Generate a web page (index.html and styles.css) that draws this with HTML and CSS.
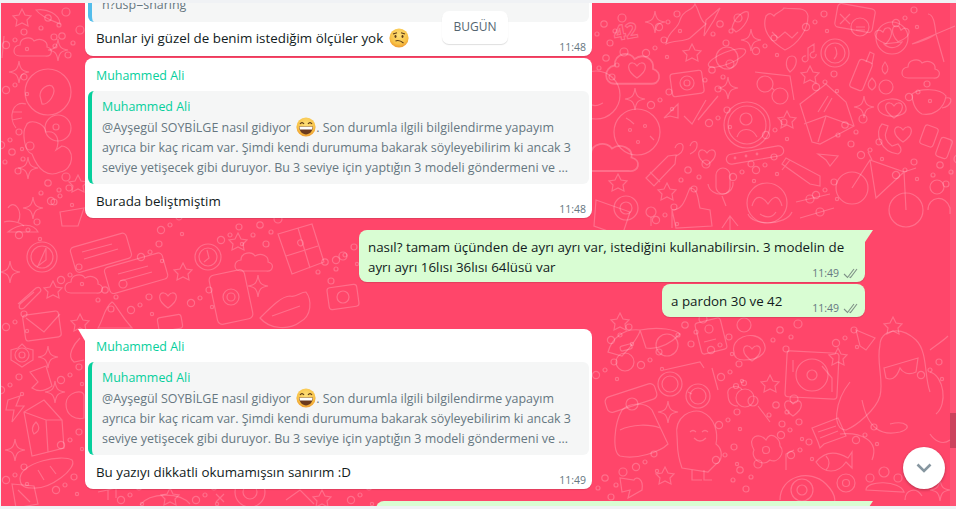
FILE: index.html
```html
<!DOCTYPE html>
<html>
<head>
    <title>Sohbet</title>
    <link rel="stylesheet" href="styles.css">
</head>
<body>
    <div class="chat">
        <svg class="doodles" width="956" height="509" viewBox="0 0 956 509" fill="none">
            <defs>
                <radialGradient id="face" cx="50%" cy="35%" r="65%">
                    <stop offset="0" stop-color="#fde07a"/>
                    <stop offset="0.7" stop-color="#f8c247"/>
                    <stop offset="1" stop-color="#ee9a2e"/>
                </radialGradient>
                <path id="star" d="M0 -9 L3 -3 L9 -2 L5 2 L6 8 L0 5 L-6 8 L-5 2 L-9 -2 L-3 -3 Z"/>
                <path id="spark" d="M0 -11 C1 -3 3 -1 10 0 C3 1 1 3 0 11 C-1 3 -3 1 -10 0 C-3 -1 -1 -3 0 -11 Z"/>
                <path id="heart" d="M0 8 C-12 0 -9 -8 -4 -7 C-2 -7 -1 -5 0 -4 C1 -5 2 -7 4 -7 C9 -8 12 0 0 8 Z"/>
                <path id="cloud" d="M-14 8 C-22 8 -22 -2 -14 -3 C-14 -11 -3 -12 0 -7 C6 -11 14 -7 13 -1 C20 1 18 9 11 8 Z"/>
                <g id="dots">
                    <circle cx="0" cy="0" r="3.2"/><circle cx="11" cy="7" r="2"/><circle cx="-7" cy="10" r="2"/>
                    <circle cx="18" cy="-6" r="4"/><circle cx="6" cy="19" r="3"/>
                </g>
                <g id="dots2">
                    <circle cx="0" cy="0" r="2"/><circle cx="9" cy="-8" r="3"/><circle cx="-9" cy="5" r="3.6"/>
                    <circle cx="12" cy="9" r="1.6"/>
                </g>
            </defs>
            <g class="lines">
                <!-- scattered dots -->
                <use href="#dots" x="604" y="24"/><use href="#dots" x="606" y="58"/>
                <use href="#dots2" x="655" y="48"/><use href="#dots2" x="668" y="22"/>
                <use href="#dots" x="720" y="24"/><use href="#dots2" x="765" y="46"/>
                <use href="#dots2" x="815" y="22"/><use href="#dots2" x="825" y="82"/>
                <use href="#dots2" x="905" y="18"/><use href="#dots2" x="918" y="92"/>
                <use href="#dots2" x="660" y="100"/><use href="#dots" x="712" y="70"/>
                <use href="#dots2" x="718" y="118"/><use href="#dots2" x="775" y="130"/>
                <use href="#dots" x="845" y="125"/><use href="#dots2" x="870" y="150"/>
                <use href="#dots" x="940" y="165"/><use href="#dots" x="688" y="170"/>
                <use href="#dots2" x="742" y="172"/><use href="#dots2" x="765" y="165"/>
                <use href="#dots2" x="825" y="190"/><use href="#dots2" x="665" y="215"/>
                <use href="#dots2" x="905" y="170"/>
                <use href="#dots2" x="620" y="335"/><use href="#dots" x="685" y="325"/>
                <use href="#dots" x="780" y="330"/><use href="#dots2" x="845" y="338"/>
                <use href="#dots2" x="605" y="370"/><use href="#dots2" x="650" y="360"/>
                <use href="#dots2" x="720" y="345"/><use href="#dots2" x="730" y="372"/>
                <use href="#dots" x="776" y="405"/><use href="#dots2" x="728" y="420"/>
                <use href="#dots2" x="725" y="455"/><use href="#dots" x="740" y="470"/>
                <use href="#dots2" x="790" y="430"/><use href="#dots2" x="800" y="450"/>
                <use href="#dots" x="605" y="478"/><use href="#dots2" x="645" y="462"/>
                <use href="#dots2" x="865" y="435"/><use href="#dots2" x="930" y="370"/>
                <use href="#dots" x="48" y="18"/><use href="#dots2" x="15" y="40"/>
                <use href="#dots" x="62" y="36"/><use href="#dots2" x="15" y="85"/>
                <use href="#dots2" x="10" y="140"/><use href="#dots" x="12" y="152"/>
                <use href="#dots" x="48" y="183"/><use href="#dots2" x="60" y="196"/>
                <use href="#dots2" x="28" y="230"/><use href="#dots2" x="70" y="275"/>
                <use href="#dots" x="105" y="290"/><use href="#dots2" x="150" y="252"/>
                <use href="#dots2" x="170" y="225"/><use href="#dots2" x="230" y="235"/>
                <use href="#dots" x="260" y="225"/><use href="#dots2" x="140" y="305"/>
                <use href="#dots2" x="200" y="298"/><use href="#dots" x="325" y="262"/>
                <use href="#dots2" x="345" y="255"/><use href="#dots2" x="15" y="322"/>
                <use href="#dots2" x="70" y="375"/><use href="#dots2" x="10" y="385"/>
                <use href="#dots2" x="70" y="440"/><use href="#dots2" x="15" y="475"/>
                <use href="#dots2" x="65" y="485"/><use href="#dots2" x="130" y="495"/>
                <use href="#dots2" x="205" y="495"/><use href="#dots2" x="360" y="495"/>

                <!-- upper right -->
                <text class="num" x="615" y="41" transform="rotate(-10 615 41)">42</text>
                <use href="#spark" x="655" y="22"/>
                <path d="M666 44 C668 30 678 30 680 20 C684 8 692 12 695 4 C700 12 700 22 706 24 L690 38 C684 42 674 40 666 44 Z"/>
                <path d="M704 36 L706 20 L720 8 L714 20 Z"/>
                <path d="M732 28 C734 18 744 10 748 12 C750 18 744 28 736 32 Z"/>
                <use href="#spark" x="751" y="40"/>
                <path d="M785 50 C768 40 762 28 766 16 C770 12 772 14 774 16 C776 12 782 12 784 8 C796 10 806 6 808 16 C808 30 798 44 785 50 Z"/>
                <path d="M772 32 L778 38 L785 32 L792 38 L798 32"/>
                <rect x="836" y="6" width="38" height="24" rx="4" transform="rotate(10 855 18)"/>
                <circle cx="860" cy="27" r="9"/><path d="M840 14 L850 24 M850 14 L840 24 M856 27 H865 M856 30 H865"/>
                <circle cx="892" cy="38" r="16"/>
                <use href="#heart" x="884" y="36" transform="rotate(-15 884 36)"/>
                <use href="#heart" x="900" y="34" transform="rotate(15 900 34)"/>
                <path d="M884 44 C890 50 898 48 902 42 Z"/>
                <path d="M928 14 C934 14 935 26 936 34 L955 26 M912 44 L936 34 L944 62 M936 34 C930 38 920 42 912 44"/>
                <path d="M808 58 V48 L814 44 V52 M816 54 a3 3 0 1 1 -2 -2 M808 58 a3 3 0 1 1 -2 -2"/>
                <circle cx="835" cy="53" r="14"/><circle cx="835" cy="53" r="10"/><path d="M835 47 C838 52 837 56 834 59"/>
                <use href="#cloud" x="637" y="70" transform="translate(-270 -45) scale(1.42 1.65)"/>
                <use href="#heart" x="637" y="70"/>
                <use href="#star" x="692" y="53"/>
                <circle cx="727" cy="58" r="11"/><ellipse cx="727" cy="58" rx="20" ry="6" transform="rotate(-22 727 58)"/>
                <path d="M790 72 C784 66 786 56 792 56 C798 56 798 66 790 72 Z"/>
                <rect x="671" y="72" width="32" height="23" rx="3" transform="rotate(-8 687 83)"/>
                <circle cx="687" cy="83" r="7"/><circle cx="687" cy="83" r="3"/>
                <circle cx="765" cy="84" r="8"/><circle cx="780" cy="96" r="8"/><path d="M755 72 L790 76 L794 100 M772 88 L774 90"/>
                <use href="#star" x="810" y="75"/>
                <use href="#spark" x="728" y="88"/>
                <rect x="854" y="60" width="14" height="30" rx="3" transform="rotate(22 861 75)"/>
                <path d="M866 62 L870 52 L874 54 L872 64"/>
                <path d="M885 74 C880 70 882 66 885 62 C888 66 890 70 885 74 Z M872 90 C866 86 868 82 872 78 C876 82 878 86 872 90 Z"/>
                <use href="#cloud" x="922" y="70"/>
                <path d="M912 94 C920 88 940 88 946 96 C944 110 932 116 922 114 C914 110 912 100 912 94 Z M946 98 C954 96 952 106 942 108"/>
                <circle cx="886" cy="87" r="7"/>
                <path d="M878 108 C876 98 904 94 906 108 C908 118 880 120 878 108 Z"/><use href="#heart" x="894" y="110"/>
                <circle cx="596" cy="95" r="24"/><path d="M590 104 C596 108 600 104 603 103"/>
                <use href="#spark" x="635" y="99"/>
                <path d="M664 118 L678 104 L678 118 L670 116 Z"/>
                <path d="M684 116 L692 124 L706 100 M698 120 L718 96"/>
                <circle cx="747" cy="125" r="23"/><circle cx="747" cy="125" r="19"/><circle cx="746" cy="119" r="6"/>
                <path d="M737 137 C740 127 752 127 757 137"/>
                <use href="#star" x="787" y="120"/>
                <path d="M800 104 L826 84 L846 102 L854 126 L820 144 L812 142 Z M804 124 L826 116 L854 126 M818 142 L826 116"/>
                <path d="M818 112 L828 96 M824 112 L832 98"/>
                <use href="#spark" x="864" y="107"/>
                <path d="M882 124 C874 132 880 152 898 154 C902 152 902 148 898 144 L892 146 C886 142 884 136 886 132 L888 126 Z"/>
                <use href="#heart" x="903" y="134"/>
                <rect x="922" y="126" width="14" height="20" rx="3" transform="rotate(20 929 136)"/>
                <rect x="938" y="138" width="12" height="20" rx="3" transform="rotate(20 944 148)"/>
                <circle cx="637" cy="132" r="23"/><circle cx="630" cy="130" r="1.5"/><circle cx="645" cy="126" r="1.5"/><circle cx="638" cy="142" r="1.5"/>
                <path d="M626 118 C630 120 632 122 634 124 M650 136 L654 140"/>
                <use href="#cloud" x="608" y="158" transform="translate(-300 -78) scale(1.5)"/>
                <path d="M675 148 C677 142 684 142 683 148 C683 152 680 154 676 156 M690 146 C692 140 698 140 697 146 C697 150 694 152 690 154"/>
                <use href="#heart" x="707" y="157"/>
                <rect x="726" y="150" width="58" height="10" rx="5" transform="rotate(-10 755 155)"/>
                <circle cx="735" cy="158" r=".8"/><circle cx="746" cy="156" r=".8"/><circle cx="757" cy="154" r=".8"/>
                <path d="M646 178 L668 156 L676 155 L675 164 L654 186 Z M650 172 L660 182"/>
                <path d="M782 164 L786 158 L820 176 L820 186 L810 184 Z M790 160 L782 170"/>
                <path d="M818 154 L838 156 L830 166 L826 160 Z"/>
                <circle cx="852" cy="188" r="16"/><circle cx="906" cy="210" r="17"/>
                <path d="M852 188 L870 160 L904 172 L906 210 M870 160 L876 198 L904 172 M868 152 L872 160 M904 172 L916 168"/>
                <rect x="716" y="168" width="14" height="26" rx="7"/>
                <path d="M708 184 C710 198 734 198 733 182 M722 196 L726 206"/>
                <use href="#star" x="618" y="183"/><use href="#star" x="667" y="192"/>
                <path d="M672 210 C684 210 686 196 690 188 C698 188 698 200 700 208 L710 210 L712 226 L676 228 Z M672 210 L672 228"/>
                <circle cx="767" cy="203" r="20"/><path d="M752 206 C756 192 764 198 768 204 C772 198 778 192 782 206 M760 214 C766 218 772 218 776 212 M748 214 C752 226 786 226 792 212"/>
                <path d="M796 202 L830 194 M800 218 L834 208"/><circle cx="810" cy="199" r="4"/><circle cx="820" cy="212" r="4"/>
                <circle cx="937" cy="187" r="7"/><path d="M928 210 C928 196 946 194 950 208 L950 214"/>
                <path d="M596 200 L630 212 L622 236 L594 226 Z"/><circle cx="626" cy="208" r="12"/><circle cx="626" cy="208" r="6"/>
                <circle cx="651" cy="212" r="5"/><path d="M651 217 V226"/>
                <path d="M722 228 L730 216 L738 226 M730 216 V232"/>

                <!-- left column -->
                <use href="#star" x="22" y="18"/>
                <path d="M36 10 C46 8 60 14 60 24 C56 22 42 18 36 10 Z"/>
                <use href="#cloud" x="34" y="48"/>
                <use href="#spark" x="58" y="50"/><use href="#spark" x="19" y="72"/>
                <path d="M4 36 L2 58"/>
                <circle cx="48" cy="92" r="23"/><path d="M40 96 C40 88 48 84 52 86 C58 92 48 106 42 104 Z"/>
                <path d="M26 104 C12 100 8 118 16 128 M12 112 L22 112 M12 120 L22 118"/>
                <path d="M26 126 C28 118 44 122 46 132 C58 130 60 142 56 150 L62 146 C76 148 74 170 60 172 C48 178 38 170 32 154 C24 152 22 132 26 126 Z"/>
                <circle cx="58" cy="128" r="13"/><circle cx="56" cy="127" r="3"/>
                <use href="#spark" x="28" y="168"/><use href="#spark" x="33" y="208"/>
                <use href="#star" x="78" y="184"/>
                <path d="M8 208 C14 198 24 212 18 222 M4 222 C10 220 20 222 24 226"/>
                <path d="M60 212 L84 208 L78 226 L62 226 Z"/>

                <!-- middle band -->
                <path d="M8 232 C20 222 34 224 38 232 Z"/>
                <circle cx="42" cy="257" r="15"/><circle cx="42" cy="257" r="11"/><path d="M38 266 L46 248 L46 260 Z"/>
                <rect x="72" y="240" width="58" height="26" rx="4" transform="rotate(-16 100 253)"/>
                <path d="M82 252 L112 244 M84 259 L118 249"/>
                <rect x="106" y="260" width="60" height="27" rx="4" transform="rotate(-16 135 273)"/>
                <path d="M118 274 L148 266 M120 281 L152 272"/>
                <use href="#spark" x="10" y="272"/>
                <path d="M18 304 L36 288 C40 286 42 290 40 292 L24 308 C20 310 18 308 20 304 L34 292"/>
                <use href="#star" x="53" y="290"/>
                <use href="#cloud" x="85" y="285"/>
                <use href="#star" x="183" y="272"/>
                <circle cx="208" cy="257" r="13"/><circle cx="208" cy="257" r="9"/><path d="M207 250 L209 258 L204 262"/>
                <use href="#star" x="238" y="242"/>
                <use href="#cloud" x="255" y="263"/>
                <path d="M278 234 L312 224 L324 262 L292 274 Z M298 228 L310 268 M286 256 L318 246"/>
                <path d="M298 244 C296 240 302 238 303 242 C304 245 300 248 298 244 Z"/>
                <rect x="213" y="272" width="36" height="50" rx="5" transform="rotate(-12 231 297)"/>
                <circle cx="231" cy="297" r="8"/><circle cx="231" cy="297" r="4"/>
                <use href="#spark" x="258" y="286"/>
                <path d="M260 318 C272 306 282 296 290 296 C296 298 300 292 306 292 C312 300 312 316 300 322 C290 330 270 330 260 318 Z M272 316 L300 306"/>
                <rect x="328" y="286" width="30" height="22" rx="3" transform="rotate(-8 343 297)"/>
                <circle cx="343" cy="297" r="6"/><use href="#heart" x="168" y="300"/>
                <rect x="24" y="313" width="36" height="26" rx="3" transform="rotate(-8 42 326)"/>
                <path d="M26 318 L44 332 L60 314"/><use href="#star" x="80" y="323"/>
                <path d="M112 302 C116 304 118 312 132 328 L98 328 C104 318 104 308 112 302 Z"/>
                <rect x="158" y="316" width="24" height="14" rx="3" transform="rotate(-10 170 323)"/>

                <!-- lower left -->
                <circle cx="22" cy="355" r="7"/><circle cx="22" cy="355" r="3"/>
                <path d="M22 344 L26 348 L33 350 L33 360 L28 363 L22 367 L16 363 L11 360 L11 350 L18 348 Z"/>
                <use href="#spark" x="48" y="357"/>
                <path d="M30 372 L46 366 L52 386 C44 392 38 392 32 388 L38 382 Z"/>
                <use href="#spark" x="55" y="392"/>
                <path d="M8 400 L20 396 L16 406 L24 406 L12 422 L14 410 L6 410 Z"/>
                <path d="M66 404 C66 392 84 388 84 396 V418 C76 420 66 416 66 404 Z"/>
                <path d="M80 338 C74 344 66 356 74 362 L84 360"/>
                <path d="M24 412 L44 400 L62 420 L64 448 L32 456 Z M24 412 L32 456 M24 412 L46 420 L62 420 M46 420 L48 452"/>
                <path d="M34 434 C30 428 34 424 36 422 C38 424 42 430 34 434 Z"/>
                <use href="#spark" x="15" y="450"/>
                <path d="M20 478 C22 462 62 454 72 460 C78 468 50 490 32 488 C22 488 20 484 20 478 Z M38 470 L44 480 M50 466 L56 474"/>
                <path d="M12 484 L34 486 L38 504 L16 508 Z M18 490 L30 502"/>

                <!-- bottom band -->
                <path d="M98 492 L108 490 V500 M108 490 L116 488 V498"/>
                <use href="#star" x="322" y="499"/><use href="#star" x="170" y="497"/>
                <circle cx="250" cy="492" r="15"/><circle cx="250" cy="492" r="7"/>
                <path d="M140 505 C150 492 180 492 190 504"/>
                <path d="M216 494 L224 502 M224 494 L216 502"/>
                <path d="M286 500 L300 490 L314 504"/>

                <!-- lower right -->
                <use href="#star" x="620" y="322"/>
                <path d="M608 352 C612 338 624 328 640 330 C640 334 632 346 622 356 Z M640 330 C660 326 676 330 680 334 C672 342 660 350 646 348 Z"/>
                <circle cx="625" cy="362" r="9"/><circle cx="667" cy="345" r="11"/><rect x="620" y="345" width="12" height="5" rx="2" transform="rotate(-15 626 347)"/>
                <rect x="698" y="320" width="26" height="32" rx="3" transform="rotate(-14 711 336)"/>
                <circle cx="709" cy="329" r="4"/><path d="M704 342 L716 339"/>
                <circle cx="744" cy="325" r="7"/>
                <path d="M734 352 C730 338 752 330 762 340 C770 350 762 360 744 360 C738 360 734 358 734 352 Z"/><use href="#heart" x="752" y="353"/>
                <rect x="786" y="352" width="52" height="46" rx="3" transform="rotate(3 812 375)"/>
                <circle cx="812" cy="375" r="16"/><circle cx="812" cy="375" r="5"/><path d="M822 366 L832 378 L832 392 M793 360 V372"/>
                <use href="#star" x="838" y="357"/>
                <path d="M856 330 L875 338 L866 350 L860 346 Z"/><use href="#star" x="893" y="326"/>
                <path d="M880 345 C880 330 900 325 916 340 C928 352 924 376 930 392 M880 345 C876 362 884 380 880 396 C876 410 856 426 846 430 C832 430 834 402 850 382"/>
                <path d="M884 368 L918 358 L916 372 C908 376 902 372 900 368 C896 380 890 380 886 378 Z"/>
                <path d="M930 350 C938 344 944 340 948 336 M930 372 C944 376 948 404 936 414"/>
                <path d="M862 400 C868 430 882 436 900 432 C914 428 906 420 890 424 M840 434 C860 432 880 440 872 460"/>
                <path d="M664 370 L700 362 L704 368 M688 392 L692 394 M712 368 L718 390"/>
                <circle cx="670" cy="384" r="8"/><circle cx="670" cy="384" r="12"/><circle cx="698" cy="396" r="8"/><circle cx="698" cy="396" r="12"/>
                <rect x="605" y="390" width="52" height="16" rx="5" transform="rotate(-18 631 398)"/>
                <path d="M622 410 C630 402 646 402 652 410 L668 444 C660 452 636 460 620 456 C612 452 614 424 622 410 Z M620 430 C632 424 650 424 660 428"/>
                <circle cx="632" cy="404" r="6"/>
                <use href="#spark" x="668" y="412"/>
                <path d="M677 436 C674 416 692 408 702 412 C716 418 718 434 716 444 C724 450 722 462 716 464 L708 472 L682 468 C676 452 678 446 677 436 Z"/>
                <path d="M690 432 C692 430 694 430 696 432 M702 432 C704 430 706 430 708 432 M694 438 C698 442 702 442 706 438 M692 470 V480 H702 M704 470 V480 H712"/>
                <circle cx="745" cy="398" r="9"/><circle cx="753" cy="401" r="5"/>
                <path d="M758 406 L770 422 M728 394 C726 386 740 384 742 390 M728 394 C728 402 732 406 738 406"/>
                <circle cx="736" cy="386" r="2.5"/><circle cx="744" cy="383" r="2.5"/>
                <use href="#star" x="770" y="384"/>
                <use href="#heart" x="793" y="408"/>
                <path d="M754 450 C746 436 760 432 766 440 C770 430 780 438 780 446 C786 452 778 464 770 460 C762 468 750 458 754 450 Z"/><circle cx="766" cy="450" r="3.5"/>
                <path d="M642 490 C644 478 636 476 634 480 L620 478 L622 492 L630 490 L628 498 Z"/>
                <use href="#star" x="665" y="476"/>
                <path d="M780 500 C780 476 810 468 826 484 C838 496 836 505 830 508 M786 470 V454 L794 450"/>
                <circle cx="802" cy="490" r="11"/><circle cx="802" cy="490" r="5"/>
                <path d="M812 428 L838 418 L846 436 L824 444 L820 448 L818 442 Z M818 432 L836 426 M820 438 L838 431"/>
                <path d="M816 462 C826 450 838 452 848 458 L852 452 L852 468 L846 462 C838 474 824 474 816 462 Z M826 456 C830 460 830 466 826 470"/>
                <circle cx="846" cy="483" r="9"/><circle cx="846" cy="483" r="3.5"/>
                <circle cx="884" cy="472" r="5"/><circle cx="870" cy="478" r="4"/><circle cx="898" cy="478" r="4"/>
                <path d="M866 490 C866 480 900 480 904 492 Z"/>
                <use href="#spark" x="940" y="490"/>
                <path d="M905 500 C905 490 916 486 922 496"/>
                <path d="M950 440 C942 446 934 440 930 434"/>
            </g>
        </svg>

        <div class="messages">
            <div class="row in">
                <div class="bubble top">
                    <div class="quote cut blue">
                        <div class="quote-text">n?usp=sharing</div>
                    </div>
                    <div class="text">Bunlar iyi güzel de benim istediğim ölçüler yok <span class="emoji"><svg viewBox="0 0 20 20"><circle cx="10" cy="10" r="9.6" fill="url(#face)"/><ellipse cx="6.5" cy="8.5" rx="1" ry="1.4" fill="#5c3b17"/><ellipse cx="13.5" cy="8.5" rx="1" ry="1.4" fill="#5c3b17"/><path d="M4 6 L8 4.8 M12 4.8 L16 6 M6.5 13 C9 12 12 13 14.5 15" stroke="#5c3b17" stroke-width="1.1" fill="none"/></svg></span></div>
                    <span class="time">11:48</span>
                </div>
            </div>

            <div class="row in gap-s">
                <div class="bubble">
                    <div class="sender">Muhammed Ali</div>
                    <div class="quote">
                        <div class="sender q">Muhammed Ali</div>
                        <div class="quote-text">@Ayşegül SOYBİLGE nasıl gidiyor <span class="emoji"><svg viewBox="0 0 20 20"><circle cx="10" cy="10" r="9.6" fill="url(#face)"/><path d="M4 7 Q6 4.4 8 7 M12 7 Q14 4.4 16 7" stroke="#5c3b17" stroke-width="1.2" fill="none"/><path d="M3 9.6 H17 C16.6 15 13.4 17.4 10 17.4 C6.6 17.4 3.4 15 3 9.6 Z" fill="#6b3a1e"/><path d="M3.4 9.8 H16.6 L16.1 12.6 H3.9 Z" fill="#fff"/></svg></span>. Son durumla ilgili bilgilendirme yapayım<br>ayrıca bir kaç ricam var. Şimdi kendi durumuma bakarak söyleyebilirim ki ancak 3<br>seviye yetişecek gibi duruyor. Bu 3 seviye için yaptığın 3 modeli göndermeni ve ...</div>
                    </div>
                    <div class="text">Burada beliştmiştim</div>
                    <span class="time">11:48</span>
                </div>
            </div>

            <div class="row out gap-l">
                <div class="bubble wide tailed">
                    <span class="tail"></span>
                    <div class="text">nasıl? tamam üçünden de ayrı ayrı var, istediğini kullanabilirsin. 3 modelin de<br>ayrı ayrı 16lısı 36lısı 64lüsü var</div>
                    <span class="time">11:49 <svg class="ticks" width="15" height="11" viewBox="0 0 15 11" fill="none"><path d="M1 6 L4.5 9.5 L11 1 M6.5 9 L7.5 9.5 L14 1" stroke="#7f9187" stroke-width="1.1"/></svg></span>
                </div>
            </div>

            <div class="row out gap-s">
                <div class="bubble short">
                    <div class="text">a pardon 30 ve 42</div>
                    <span class="time">11:49 <svg class="ticks" width="15" height="11" viewBox="0 0 15 11" fill="none"><path d="M1 6 L4.5 9.5 L11 1 M6.5 9 L7.5 9.5 L14 1" stroke="#7f9187" stroke-width="1.1"/></svg></span>
                </div>
            </div>

            <div class="row in gap-l">
                <div class="bubble tailed">
                    <span class="tail"></span>
                    <div class="sender">Muhammed Ali</div>
                    <div class="quote">
                        <div class="sender q">Muhammed Ali</div>
                        <div class="quote-text">@Ayşegül SOYBİLGE nasıl gidiyor <span class="emoji"><svg viewBox="0 0 20 20"><circle cx="10" cy="10" r="9.6" fill="url(#face)"/><path d="M4 7 Q6 4.4 8 7 M12 7 Q14 4.4 16 7" stroke="#5c3b17" stroke-width="1.2" fill="none"/><path d="M3 9.6 H17 C16.6 15 13.4 17.4 10 17.4 C6.6 17.4 3.4 15 3 9.6 Z" fill="#6b3a1e"/><path d="M3.4 9.8 H16.6 L16.1 12.6 H3.9 Z" fill="#fff"/></svg></span>. Son durumla ilgili bilgilendirme yapayım<br>ayrıca bir kaç ricam var. Şimdi kendi durumuma bakarak söyleyebilirim ki ancak 3<br>seviye yetişecek gibi duruyor. Bu 3 seviye için yaptığın 3 modeli göndermeni ve ...</div>
                    </div>
                    <div class="text">Bu yazıyı dikkatli okumamışsın sanırım :D</div>
                    <span class="time">11:49</span>
                </div>
            </div>

            <div class="row out gap-l">
                <div class="bubble next tailed"><span class="tail"></span></div>
            </div>
        </div>

        <div class="date-chip">BUGÜN</div>
        <div class="scroll-thumb"></div>
        <button class="down-btn"><svg width="16" height="10" viewBox="0 0 16 10" fill="none"><path d="M1.5 1.5 L8 8 L14.5 1.5" stroke="#8696a0" stroke-width="2.6"/></svg></button>
    </div>
</body>
</html>
```

FILE: styles.css
```css
* { box-sizing: border-box; }
html, body { margin: 0; height: 100%; overflow: hidden; }
body { background: #f0f2f5; font-family: "Open Sans", "Noto Sans", Arial, sans-serif; padding: 3px 0 3px 1px; }

.chat { position: relative; height: 503px; background: #ff466a; overflow: hidden; }
.doodles { position: absolute; left: -1px; top: -3px; }
.lines { stroke: rgba(255,255,255,0.22); stroke-width: 1.2; }
.num { font: bold 21px "Open Sans", sans-serif; }

.messages { position: relative; display: flex; flex-direction: column; margin-top: -27px; padding: 0 91px 0 84px; }
.row { display: flex; }
.row.out { justify-content: flex-end; }
.gap-s { margin-top: 2px; }
.gap-l { margin-top: 12px; }

.bubble { position: relative; width: 507px; background: #fff; border-radius: 8px; padding: 3px 3px 7px; box-shadow: 0 1px 1px rgba(0,0,0,0.12); color: #111b21; }
.bubble.top { height: 80px; }
.row.out .bubble { background: #d9fdd3; }
.bubble.wide { width: 506px; height: 52px; padding: 7px 9px; }
.bubble.short { width: 203px; height: 33px; padding: 7px 9px; }
.bubble.next { width: 489px; height: 20px; }
.row.in .tailed { border-top-left-radius: 0; }
.row.out .tailed { border-top-right-radius: 0; }

.tail { position: absolute; top: 0; width: 0; height: 0; border-top: 12px solid; }
.row.in .tail { left: -7px; border-top-color: #fff; border-left: 7px solid transparent; }
.row.out .tail { right: -8px; border-top-color: #d9fdd3; border-right: 8px solid transparent; }

.sender { color: #06cf9c; font-size: 12.45px; line-height: 18px; padding: 6px 0 6px 8px; height: 30px; }
.sender.q { padding: 7px 0 0; height: 26px; }

.quote { background: #f5f6f6; border-left: 4px solid #06cf9c; border-radius: 6px; padding: 0 8px 0 10px; height: 93px; }
.quote.blue { border-left-color: #53bdeb; }
.quote.cut { height: 43px; padding-top: 16px; }
.quote-text { font-size: 12.45px; line-height: 20px; color: #667781; white-space: nowrap; }

.text { font-size: 13.35px; line-height: 20px; padding: 7px 0 0 8px; white-space: nowrap; }
.top .text { padding-top: 6px; }
.row.out .text { padding: 0; }

.time { position: absolute; right: 6px; bottom: 2px; font-size: 10.5px; line-height: 14px; color: #667781; display: flex; align-items: center; gap: 4px; }
.row.out .time { right: 7px; bottom: 2px; }

.emoji { display: inline-block; width: 20px; height: 20px; margin-left: 2px; vertical-align: -5px; }
.emoji svg { display: block; width: 20px; height: 20px; }

.date-chip { position: absolute; left: 441px; top: 8px; width: 66px; height: 33px; background: #fff; border-radius: 7px; box-shadow: 0 1px 1px rgba(0,0,0,0.13); color: #54656f; font-size: 12px; line-height: 32px; text-align: center; }
.scroll-thumb { position: absolute; right: 0; top: 0; bottom: 0; width: 6px; background: rgba(255,255,255,0.08); }
.scroll-thumb::after { content: ""; position: absolute; left: 0; top: 410px; width: 6px; height: 35px; background: rgba(0,0,0,0.2); }
.down-btn { position: absolute; left: 902px; top: 444px; width: 42px; height: 42px; border: 0; border-radius: 50%; background: #fff; box-shadow: 0 1px 3px rgba(0,0,0,0.3); display: flex; align-items: center; justify-content: center; padding: 0; }
```
